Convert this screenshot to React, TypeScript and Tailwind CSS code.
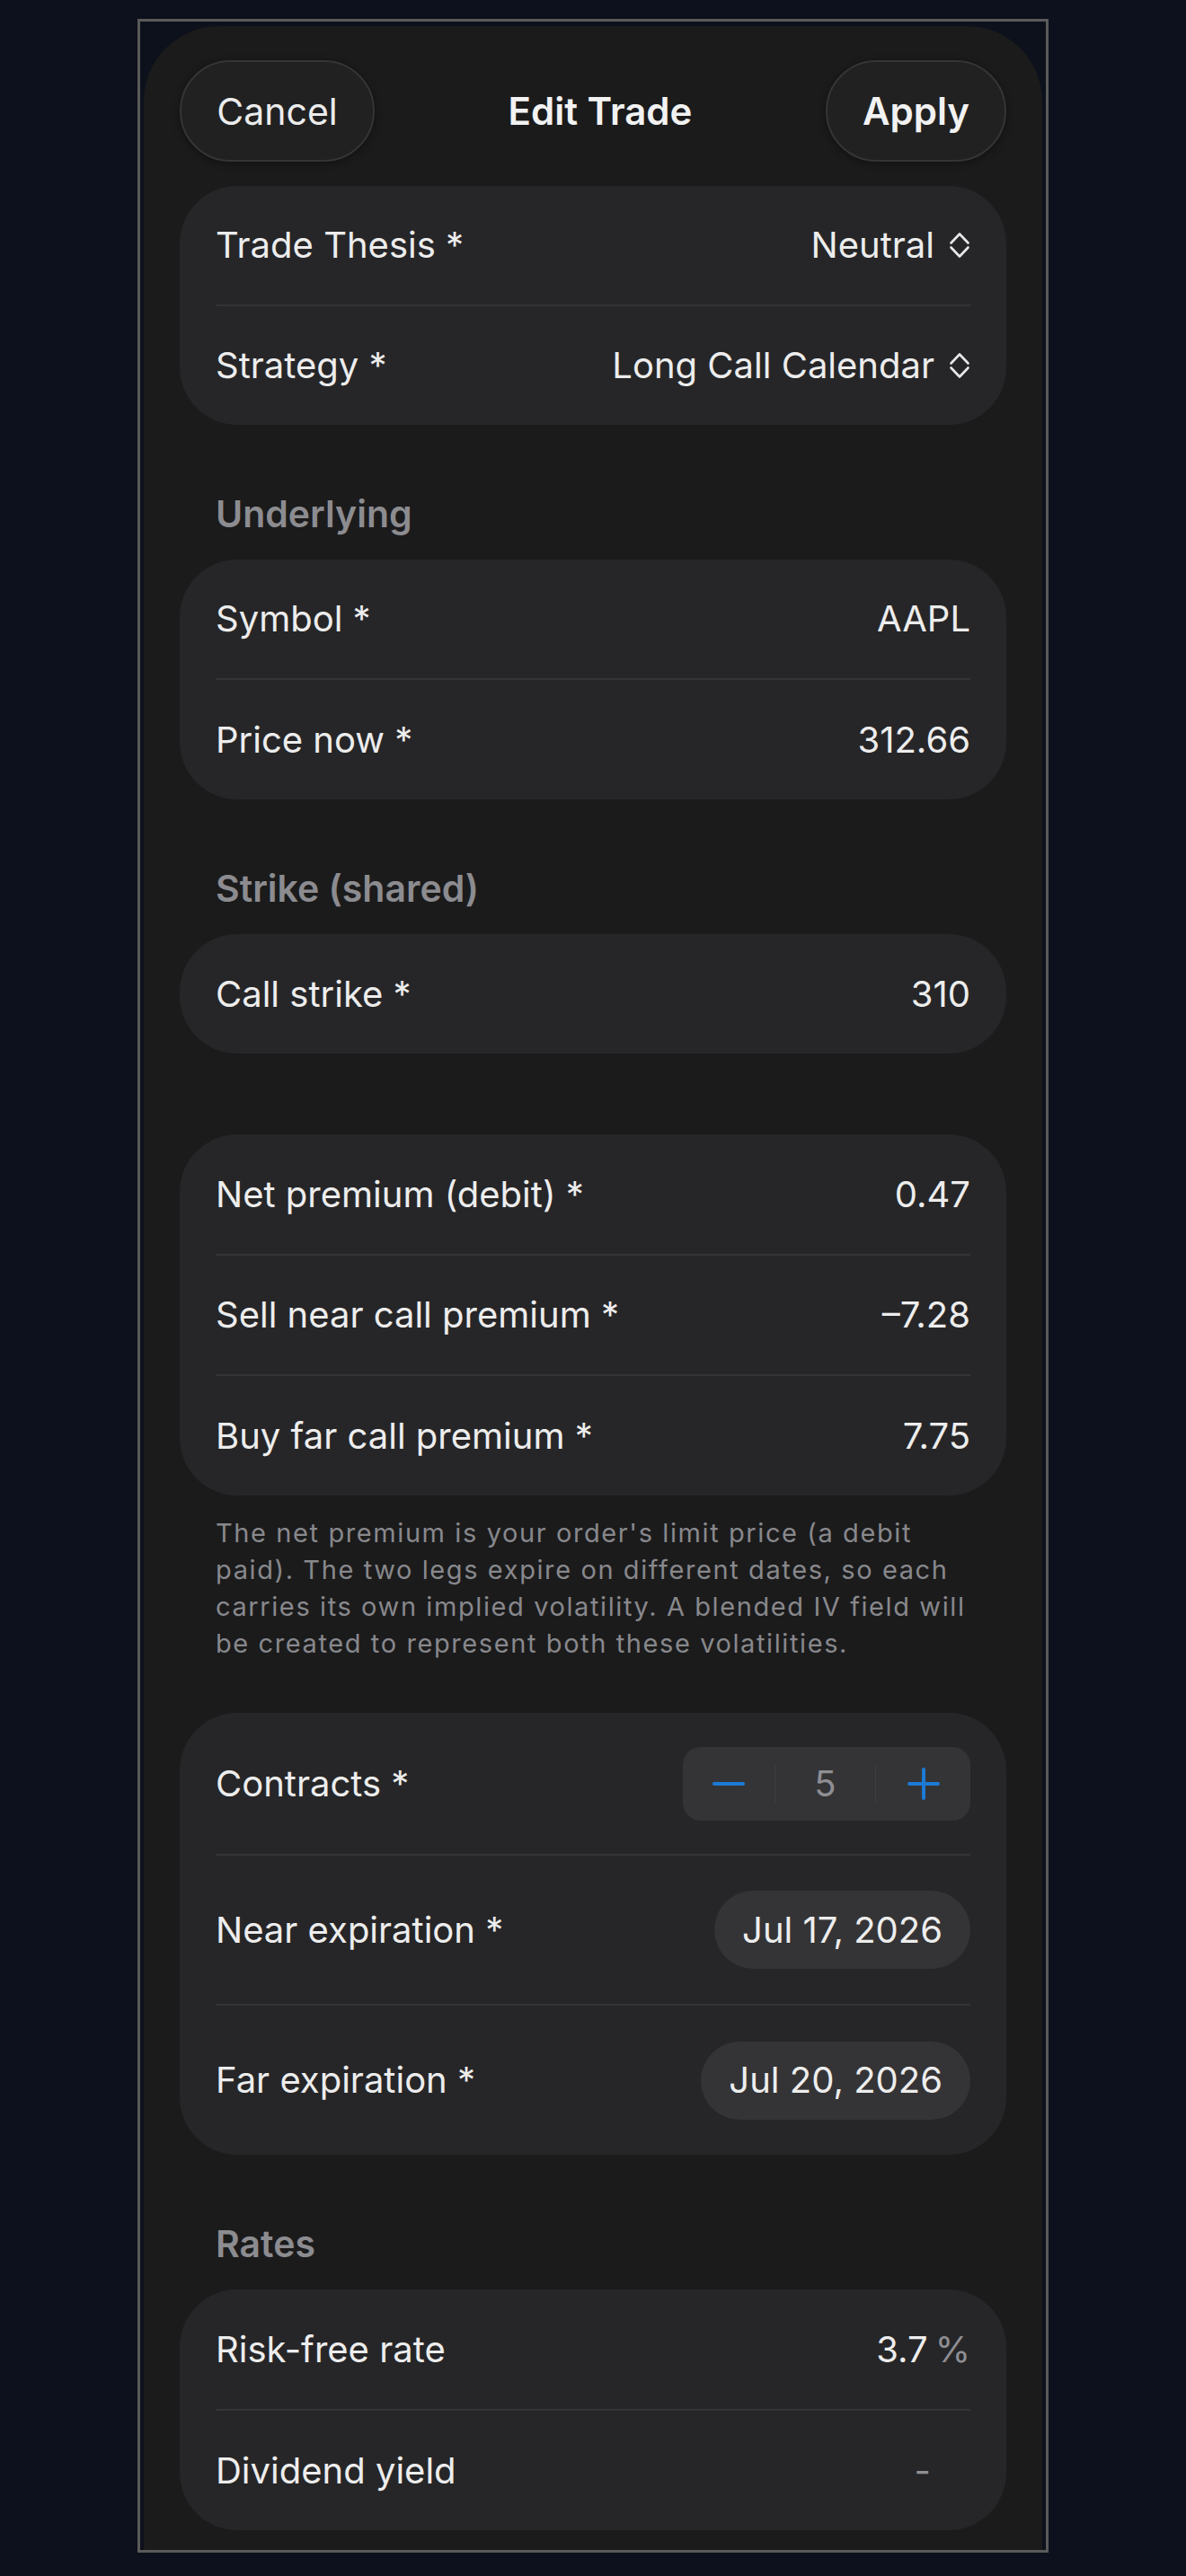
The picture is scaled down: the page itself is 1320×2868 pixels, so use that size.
import { ReactNode } from "react";

function UpDown() {
  return (
    <svg
      width="24"
      height="32"
      viewBox="0 0 24 32"
      fill="none"
      stroke="#e8e8e8"
      strokeWidth="2.6"
      strokeLinecap="round"
      strokeLinejoin="round"
      className="ml-[16px]"
    >
      <path d="M2.5 13.5 12 3.5l9.5 10" />
      <path d="M2.5 18.5 12 28.5l9.5-10" />
    </svg>
  );
}

function Row({ label, children, h }: { label: string; children?: ReactNode; h: string }) {
  return (
    <div className={`flex items-center justify-between px-[40px] ${h}`}>
      <span className="text-[#ededed]">{label}</span>
      <div className="flex items-center text-[#ededed]">{children}</div>
    </div>
  );
}

function Divider() {
  return <div className="mx-[40px] h-[2px] bg-[#343436]" />;
}

function Card({ children }: { children: ReactNode }) {
  return <div className="rounded-[64px] bg-[#262628]">{children}</div>;
}

function SectionTitle({ text }: { text: string }) {
  return (
    <div className="mt-[75px] mb-[27px] h-[48px] px-[40px] text-[41px] font-semibold text-[#8c8c90]">
      {text}
    </div>
  );
}

function Stepper() {
  return (
    <div className="grid h-[82px] w-[320px] grid-cols-[102px_113px_105px] items-center rounded-[20px] bg-[#343437]">
      <div className="flex justify-center">
        <div className="h-[4px] w-[36px] rounded-full bg-[#1c7ad4]" />
      </div>
      <div className="flex h-[44px] items-center justify-center border-x-[1.5px] border-[#3d3d40] text-[#8e8e93]">
        5
      </div>
      <div className="flex justify-center">
        <svg width="36" height="36" viewBox="0 0 36 36" stroke="#1c7ad4" strokeWidth="4" strokeLinecap="round">
          <path d="M18 2v32M2 18h32" />
        </svg>
      </div>
    </div>
  );
}

function DatePill({ text }: { text: string }) {
  return (
    <div className="flex h-[87px] items-center rounded-full bg-[#343436] px-[31px] text-[#ededed]">
      {text}
    </div>
  );
}

export default function App() {
  return (
    <div className="flex h-[2868px] justify-center overflow-hidden bg-[#0d111d] pt-[21px] font-[Inter,sans-serif] text-[40px] leading-[48px]">
      <div className="flex h-[2821px] w-[1014px] flex-col border-[3px] border-[#5a5a5a] bg-[#0d111c] px-[4px] pt-[5px]">
        <div className="flex-1 rounded-t-[84px] bg-[#1b1b1c] px-[40px]">
          <header className="mt-[38px] flex items-center justify-between">
            <button className="flex h-[113px] w-[217px] items-center justify-center rounded-full border-[2px] border-[#353535] bg-[#212121] text-[41px] text-[#ececec] shadow-[0_2px_8px_rgba(0,0,0,0.4)]">
              Cancel
            </button>
            <h1 className="text-[42px] font-semibold text-[#f2f2f2]">Edit Trade</h1>
            <button className="flex h-[113px] w-[201px] items-center justify-center rounded-full border-[2px] border-[#353535] bg-[#212121] text-[42px] font-semibold text-[#f2f2f2] shadow-[0_2px_8px_rgba(0,0,0,0.4)]">
              Apply
            </button>
          </header>

          <div className="mt-[27px]">
            <Card>
              <Row label="Trade Thesis *" h="h-[132px]">
                Neutral
                <UpDown />
              </Row>
              <Divider />
              <Row label="Strategy *" h="h-[132px]">
                Long Call Calendar
                <UpDown />
              </Row>
            </Card>
          </div>

          <SectionTitle text="Underlying" />
          <Card>
            <Row label="Symbol *" h="h-[132px]">AAPL</Row>
            <Divider />
            <Row label="Price now *" h="h-[133px]">312.66</Row>
          </Card>

          <SectionTitle text="Strike (shared)" />
          <Card>
            <Row label="Call strike *" h="h-[133px]">310</Row>
          </Card>

          <div className="mt-[90px]">
            <Card>
              <Row label="Net premium (debit) *" h="h-[133px]">0.47</Row>
              <Divider />
              <Row label="Sell near call premium *" h="h-[132px]">–7.28</Row>
              <Divider />
              <Row label="Buy far call premium *" h="h-[133px]">7.75</Row>
            </Card>
          </div>

          <p className="mt-[21px] whitespace-nowrap px-[40px] text-[29px] leading-[41px] tracking-[0.055em] text-[#88888c]">
            The net premium is your order's limit price (a debit
            <br />
            paid). The two legs expire on different dates, so each
            <br />
            carries its own implied volatility. A blended IV field will
            <br />
            be created to represent both these volatilities.
          </p>

          <div className="mt-[57px]">
            <Card>
              <Row label="Contracts *" h="h-[157px]">
                <Stepper />
              </Row>
              <Divider />
              <Row label="Near expiration *" h="h-[165px]">
                <DatePill text="Jul 17, 2026" />
              </Row>
              <Divider />
              <Row label="Far expiration *" h="h-[166px]">
                <DatePill text="Jul 20, 2026" />
              </Row>
            </Card>
          </div>

          <SectionTitle text="Rates" />
          <Card>
            <Row label="Risk-free rate" h="h-[133px]">
              3.7
              <span className="ml-[8px] text-[#8e8e93]">%</span>
            </Row>
            <Divider />
            <Row label="Dividend yield" h="h-[133px]">
              <span className="mr-[44px] text-[#8e8e93]">-</span>
            </Row>
          </Card>
        </div>
      </div>
    </div>
  );
}
